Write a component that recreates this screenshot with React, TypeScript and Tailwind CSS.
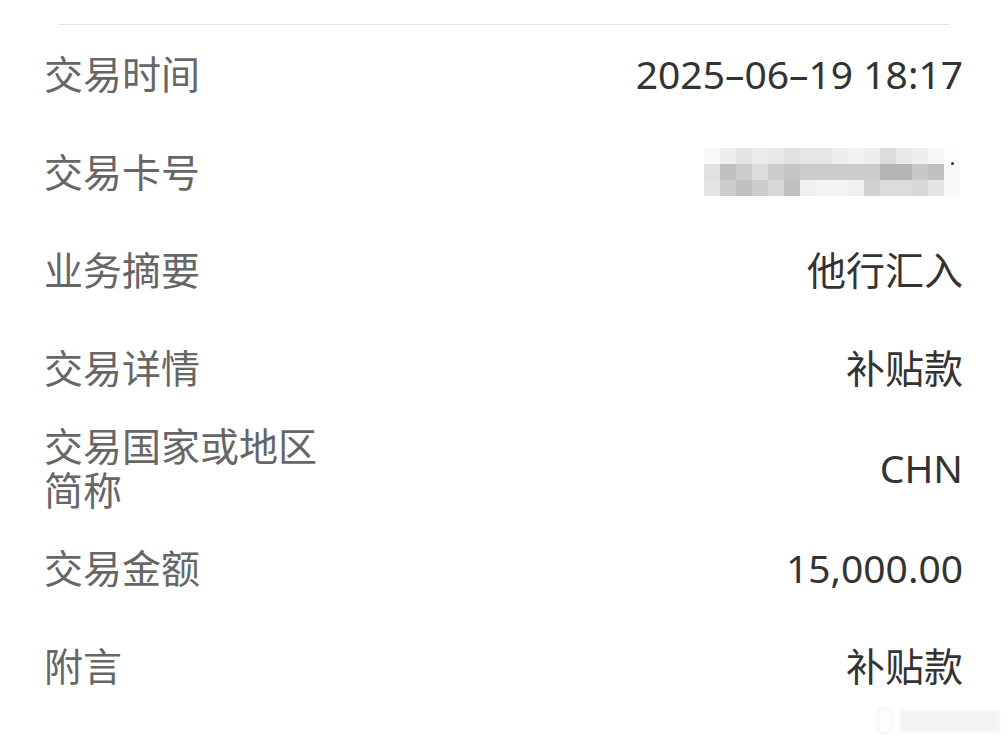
import React from 'react'

const rows: { label: string; value: string }[] = [
  { label: '交易时间', value: '2025–06–19 18:17' },
  { label: '交易卡号', value: '' },
  { label: '业务摘要', value: '他行汇入' },
  { label: '交易详情', value: '补贴款' },
  { label: '交易国家或地区简称', value: 'CHN' },
  { label: '交易金额', value: '15,000.00' },
  { label: '附言', value: '补贴款' },
]

// pixelated card number
const mosaic = [
  ['#f8f8f8', '#eeeeee', '#e3e3e3', '#eaeaea', '#e8e8e8', '#e0e0e0', '#e6e6e6', '#e6e6e6', '#eeeeee', '#f2f2f2', '#eeeeee', '#dcdcdc', '#e8e8e8', '#eeeeee', '#f6f6f6', '#fdfdfd'],
  ['#e0e0e0', '#c0c0c0', '#cccccc', '#dddddd', '#cccccc', '#c4c4c4', '#cccccc', '#cccccc', '#cccccc', '#cccccc', '#cccccc', '#b4b4b4', '#b4b4b4', '#c8c8c8', '#c0c0c0', '#fafafa'],
  ['#e4e4e4', '#cccccc', '#c0c0c0', '#cccccc', '#d8d8d8', '#c0c0c0', '#f0f0f0', '#f4f4f4', '#f4f4f4', '#f0f0f0', '#d0d0d0', '#dcdcdc', '#dcdcdc', '#d8d8d8', '#e4e4e4', '#fafafa'],
]

function Masked() {
  return (
    <div className="relative mr-[3px] flex flex-col">
      {mosaic.map((r, i) => (
        <div key={i} className="flex">
          {r.map((c, j) => (
            <div key={j} className="h-4 w-4" style={{ background: c }} />
          ))}
        </div>
      ))}
      <div className="absolute right-[6px] top-[14px] h-[3px] w-[3px] rounded-full bg-[#333]" />
    </div>
  )
}

export default function App() {
  return (
    <div className="relative h-[742px] w-[1008px] overflow-hidden bg-white" style={{ fontFamily: '"Noto Sans", "Noto Sans CJK SC", sans-serif' }}>
      <div className="pt-6">
        <div className="mx-[58px] h-px bg-[#e6e6e6]" />
        <div className="flex flex-col pl-[44px] pr-[45px]">
          {rows.map((r, i) => (
            <div key={i} className={`flex items-center justify-between ${i === 4 ? 'h-[102px]' : 'h-[98px]'}`}>
              <div className="w-[290px] text-[39px] leading-[44px] text-[#666]">{r.label}</div>
              {i === 1 ? (
                <Masked />
              ) : (
                <div className="text-[39px] leading-[44px] text-[#333]">{r.value}</div>
              )}
            </div>
          ))}
        </div>
      </div>
      <div className="absolute bottom-[8px] right-[8px] flex items-center gap-2 opacity-60 blur-[1px]">
        <div className="h-[26px] w-[14px] rounded-b-md border border-[#ddd]" />
        <div className="h-[22px] w-[100px] bg-[#eee]" />
      </div>
    </div>
  )
}
